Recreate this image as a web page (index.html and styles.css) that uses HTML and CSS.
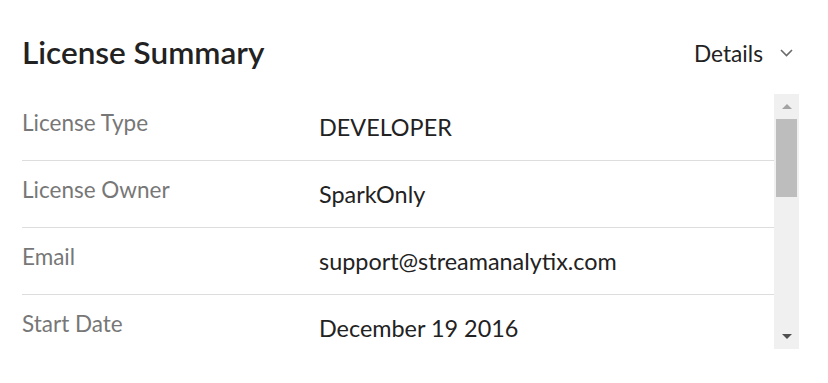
FILE: index.html
```html
<!DOCTYPE html>
<html>
<head>
<meta charset="utf-8">
<link rel="stylesheet" href="styles.css">
</head>
<body>
<div class="panel">
  <div class="header">
    <h1 class="title">License Summary</h1>
    <div class="details">
      <span class="details-label">Details</span>
      <svg class="chevron" width="13" height="8" viewBox="0 0 13 8"><path d="M1 1 L6.5 6.5 L12 1" fill="none" stroke="#6a6a6a" stroke-width="1.6"/></svg>
    </div>
  </div>
  <div class="body">
    <div class="rows">
      <div class="row"><div class="label">License Type</div><div class="value">DEVELOPER</div></div>
      <div class="row"><div class="label">License Owner</div><div class="value">SparkOnly</div></div>
      <div class="row"><div class="label">Email</div><div class="value">support@streamanalytix.com</div></div>
      <div class="row"><div class="label">Start Date</div><div class="value">December 19 2016</div></div>
    </div>
    <div class="scrollbar">
      <div class="sb-btn"><span class="tri-up"></span></div>
      <div class="sb-track"><div class="sb-thumb"></div></div>
      <div class="sb-btn"><span class="tri-down"></span></div>
    </div>
  </div>
</div>
</body>
</html>
```
FILE: styles.css
```css
html, body {
  margin: 0;
  padding: 0;
  background: #ffffff;
}
body {
  font-family: Lato, "Noto Sans", sans-serif;
  color: #222222;
}
.panel {
  width: 828px;
  height: 383px;
  box-sizing: border-box;
  padding: 0 29px 0 22px;
}
.header {
  height: 94px;
  display: flex;
  align-items: flex-start;
  justify-content: space-between;
}
.title {
  margin: 0;
  padding-top: 34px;
  font-size: 31.5px;
  line-height: 36px;
  font-weight: 600;
  color: #222222;
}
.details {
  display: flex;
  align-items: center;
  gap: 17px;
  padding-top: 40px;
  padding-right: 6px;
}
.details-label {
  font-size: 22.7px;
  line-height: 28px;
  color: #222222;
}
.chevron {
  display: block;
  margin-top: -2px;
}
.body {
  display: flex;
  height: 255px;
  overflow: hidden;
}
.rows {
  flex: 1;
  overflow: hidden;
}
.row {
  display: flex;
  height: 66px;
  border-bottom: 1px solid #dddddd;
}
.label {
  width: 297px;
  flex-shrink: 0;
  padding-top: 15px;
  font-size: 22.5px;
  line-height: 28px;
  color: #777777;
}
.value {
  padding-top: 19px;
  font-size: 23.4px;
  line-height: 28px;
  color: #222222;
}
.scrollbar {
  width: 25px;
  display: flex;
  flex-direction: column;
  background: #f0f0f0;
}
.sb-btn {
  height: 25px;
  display: flex;
  align-items: center;
  justify-content: center;
}
.sb-track {
  flex: 1;
  padding: 0 2px;
}
.sb-thumb {
  height: 78px;
  background: #bdbdbd;
}
.tri-up {
  width: 0;
  height: 0;
  border-left: 5.5px solid transparent;
  border-right: 5.5px solid transparent;
  border-bottom: 5px solid #a3a3a3;
}
.tri-down {
  width: 0;
  height: 0;
  border-left: 5.5px solid transparent;
  border-right: 5.5px solid transparent;
  border-top: 5px solid #505050;
}
```
